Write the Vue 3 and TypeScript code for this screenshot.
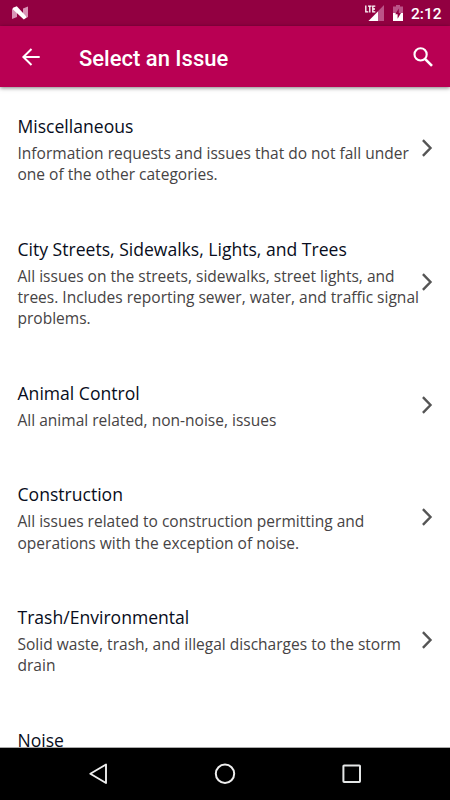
<script setup lang="ts">
interface Issue {
  title: string
  lines: string[]
}

const issues: Issue[] = [
  {
    title: 'Miscellaneous',
    lines: ['Information requests and issues that do not fall under', 'one of the other categories.'],
  },
  {
    title: 'City Streets, Sidewalks, Lights, and Trees',
    lines: [
      'All issues on the streets, sidewalks, street lights, and',
      'trees. Includes reporting sewer, water, and traffic signal',
      'problems.',
    ],
  },
  { title: 'Animal Control', lines: ['All animal related, non-noise, issues'] },
  {
    title: 'Construction',
    lines: ['All issues related to construction permitting and', 'operations with the exception of noise.'],
  },
  {
    title: 'Trash/Environmental',
    lines: ['Solid waste, trash, and illegal discharges to the storm', 'drain'],
  },
  { title: 'Noise', lines: [] },
]
</script>

<template>
  <div class="screen">
    <div class="status-bar">
      <svg class="n-logo" width="16" height="14" viewBox="0 0 16 14">
        <path d="M0 2.2L5 4.5V11L0 13ZM11 2.5L16 0.5V11.5L11 9Z" fill="#d894b6" />
        <path d="M1 1.8L4.8 0.3L15 11.3L11.8 13.5L1 3.6Z" fill="#fff" />
      </svg>
      <div class="status-icons">
        <svg class="signal" width="19" height="17" viewBox="0 0 19 17">
          <path d="M19 0V16H3.5Z" fill="#bb5488" />
          <path d="M0 0H11V8H0Z" fill="#920041" />
          <path d="M13 6.5V16H3.5Z" fill="#fff" />
          <path
            d="M0.8 0.5V6.8H3.3M3 1.2H6.6M4.8 1.2V7.5M10.3 1.2H7.8V6.8H10.3M7.8 4H10"
            fill="none" stroke="#fff" stroke-width="1.3"
          />
        </svg>
        <svg class="battery" width="10" height="16" viewBox="0 0 10 16">
          <path d="M3 0H7V1.6H10V16H0V1.6H3Z" fill="#bb5488" />
          <path d="M0 8H10V16H0Z" fill="#fff" />
          <path d="M5.8 3.5L2.2 9.3H4.6V13.7L8 7.9H5.8Z" fill="#920041" />
        </svg>
        <span class="clock">2:12</span>
      </div>
    </div>
    <header class="app-bar">
      <svg class="back" width="20" height="18" viewBox="0 0 20 18">
        <path d="M18.7 9H2M10.5 1L2.4 9L10.5 17" fill="none" stroke="#fff" stroke-width="2" />
      </svg>
      <h1>Select an Issue</h1>
      <svg class="search" width="20" height="20" viewBox="0 0 20 20">
        <circle cx="7.6" cy="7.4" r="6.1" fill="none" stroke="#fff" stroke-width="2.1" />
        <path d="M12 11.8L19 18.8" stroke="#fff" stroke-width="2.6" />
      </svg>
    </header>
    <main class="issues">
      <div v-for="issue in issues" :key="issue.title" class="issue">
        <div class="copy">
          <h2>{{ issue.title }}</h2>
          <p v-for="line in issue.lines" :key="line">{{ line }}</p>
        </div>
        <svg v-if="issue.lines.length" class="chevron" width="12" height="18" viewBox="0 0 12 18">
          <path d="M1.9 1.2L9.5 9L1.9 16.8" fill="none" stroke="#555" stroke-width="2.4" />
        </svg>
      </div>
    </main>
    <nav class="nav-bar">
      <svg width="20" height="22" viewBox="0 0 20 22">
        <path d="M18 1.5V20L2.3 10.7Z" fill="none" stroke="#eee" stroke-width="1.9" stroke-linejoin="round" />
      </svg>
      <svg width="22" height="22" viewBox="0 0 22 22">
        <circle cx="11" cy="10.8" r="9.2" fill="none" stroke="#eee" stroke-width="2" />
      </svg>
      <svg width="20" height="20" viewBox="0 0 20 20">
        <rect x="1.4" y="1.4" width="16.6" height="16.6" rx="0.7" fill="none" stroke="#e4e6e6" stroke-width="2" />
      </svg>
    </nav>
  </div>
</template>

<style>
body {
  margin: 0;
  overflow: hidden;
}
</style>

<style scoped>
.screen {
  display: flex;
  flex-direction: column;
  width: 450px;
  height: 800px;
  overflow: hidden;
  background: #fff;
  font-family: 'Open Sans', sans-serif;
}
.status-bar {
  display: flex;
  flex: none;
  align-items: flex-start;
  justify-content: space-between;
  box-sizing: border-box;
  height: 26px;
  padding: 0 9px 0 12px;
  background: #920041;
}
.n-logo {
  margin-top: 6px;
}
.status-icons {
  display: flex;
  align-items: flex-start;
}
.signal {
  margin-top: 5px;
}
.battery {
  margin: 5px 8px 0 9px;
}
.clock {
  width: 30px;
  color: #fff;
  font: 500 15.5px/28px Roboto, sans-serif;
  white-space: nowrap;
}
.app-bar {
  position: relative;
  display: flex;
  flex: none;
  align-items: center;
  box-sizing: border-box;
  height: 61px;
  padding: 0 17px 0 21px;
  background: #b90053;
  box-shadow: 0 1px 4px rgba(0, 0, 0, 0.5);
}
h1 {
  flex: 1;
  margin: 4px 0 0 38px;
  color: #fff;
  font: 500 22px/30px Roboto, sans-serif;
}
.issues {
  flex: 1;
  min-height: 0;
  overflow: hidden;
  border-bottom: 1px solid #aaa;
}
.issue {
  display: flex;
  align-items: center;
  justify-content: space-between;
  padding: 26.65px 17px 24.55px 17.5px;
}
.copy {
  width: 403px;
  white-space: nowrap;
}
h2 {
  margin: 0 0 4px;
  color: #080d20;
  font-size: 17.57px;
  font-weight: 400;
  line-height: 25px;
}
p {
  margin: 0;
  color: #464344;
  font-size: 15.54px;
  line-height: 21.35px;
}
.chevron {
  flex: none;
  margin-bottom: 2px;
}
.nav-bar {
  display: flex;
  flex: none;
  align-items: center;
  justify-content: space-between;
  box-sizing: border-box;
  height: 52px;
  padding: 0 88px;
  background: #000;
}
</style>
